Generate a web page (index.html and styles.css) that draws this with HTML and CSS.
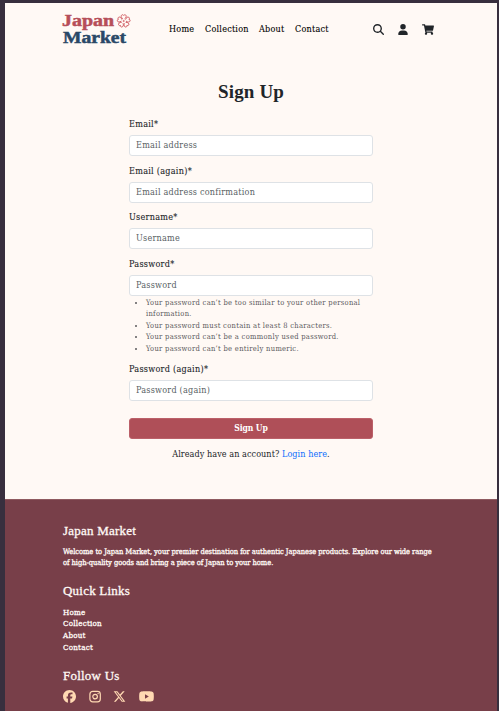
FILE: index.html
```html
<!DOCTYPE html>
<html lang="en">
<head>
<meta charset="utf-8">
<title>Sign Up - Japan Market</title>
<link rel="stylesheet" href="styles.css">
</head>
<body>
<div class="page">
  <header class="header">
    <a class="logo" href="#" aria-label="Japan Market">
      <svg width="70" height="36" viewBox="0 0 70 36">
        <text class="logo-top" x="0" y="14" textLength="52" lengthAdjust="spacingAndGlyphs">Japan</text>
        <text class="logo-bottom" x="1" y="31.3" textLength="63" lengthAdjust="spacingAndGlyphs">Market</text>
        <g class="blossom" transform="translate(61.7 9)">
          <path id="petal" d="M-.8-2.2C-3.6-4-2.6-6.8-.6-6.2L0-5.5.6-6.2C2.6-6.8 3.6-4 .8-2.2"/>
          <use href="#petal" transform="rotate(72)"/><use href="#petal" transform="rotate(144)"/>
          <use href="#petal" transform="rotate(216)"/><use href="#petal" transform="rotate(288)"/>
          <circle r=".6"/>
        </g>
      </svg>
    </a>
    <nav class="nav"><a class="n1" href="#">Home</a><a class="n2" href="#">Collection</a><a class="n3" href="#">About</a><a class="n4" href="#">Contact</a></nav>
    <div class="tools">
      <svg width="11" height="11" viewBox="0 0 512 512"><path d="M416 208c0 45.9-14.9 88.3-40 122.7L502.6 457.4c12.5 12.5 12.5 32.8 0 45.3s-32.8 12.5-45.3 0L330.7 376c-34.4 25.2-76.8 40-122.7 40C93.1 416 0 322.9 0 208S93.1 0 208 0S416 93.1 416 208zM208 352a144 144 0 1 0 0-288 144 144 0 1 0 0 288z"/></svg>
      <svg width="10" height="11" viewBox="0 0 448 512"><path d="M224 256A128 128 0 1 0 224 0a128 128 0 1 0 0 256zm-45.7 48C79.8 304 0 383.8 0 482.3C0 498.7 13.3 512 29.7 512H418.3c16.4 0 29.7-13.3 29.7-29.7C448 383.8 368.2 304 269.7 304H178.3z"/></svg>
      <svg width="12" height="11" viewBox="0 0 576 512"><path d="M528.12 301.319l47.273-208C578.806 78.301 567.391 64 551.99 64H159.208l-9.166-44.81C147.758 8.021 137.93 0 126.529 0H24C10.745 0 0 10.745 0 24v16c0 13.255 10.745 24 24 24h69.883l70.248 343.435C147.325 417.1 136 435.222 136 456c0 30.928 25.072 56 56 56s56-25.072 56-56c0-15.674-6.447-29.835-16.824-40h209.647C430.447 426.165 424 440.326 424 456c0 30.928 25.072 56 56 56s56-25.072 56-56c0-22.172-12.888-41.332-31.579-50.405l5.517-24.276c3.413-15.018-8.002-29.319-23.403-29.319H218.117l-6.545-32h293.145c11.206 0 20.92-7.754 23.403-18.681z"/></svg>
    </div>
  </header>
  <main class="main">
    <h1 class="title">Sign Up</h1>
    <form class="form">
      <div class="field"><label for="email">Email*</label><input id="email" placeholder="Email address"></div>
      <div class="field"><label for="email2">Email (again)*</label><input id="email2" placeholder="Email address confirmation"></div>
      <div class="field"><label for="user">Username*</label><input id="user" placeholder="Username"></div>
      <div class="field field-help"><label for="pass">Password*</label><input id="pass" placeholder="Password">
        <ul class="help">
          <li>Your password can’t be too similar to your other personal<br>information.</li>
          <li>Your password must contain at least 8 characters.</li>
          <li>Your password can’t be a commonly used password.</li>
          <li>Your password can’t be entirely numeric.</li>
        </ul>
      </div>
      <div class="field"><label for="pass2">Password (again)*</label><input id="pass2" placeholder="Password (again)"></div>
      <button class="submit" type="button">Sign Up</button>
      <p class="login">Already have an account? <a href="#">Login here</a>.</p>
    </form>
  </main>
  <footer class="footer">
    <h2>Japan Market</h2>
    <p class="about">Welcome to Japan Market, your premier destination for authentic Japanese products. Explore our wide range<br>of high-quality goods and bring a piece of Japan to your home.</p>
    <h2>Quick Links</h2>
    <ul class="links"><li>Home</li><li>Collection</li><li>About</li><li>Contact</li></ul>
    <h2>Follow Us</h2>
    <div class="social">
      <svg width="13" height="13" viewBox="0 0 512 512"><path d="M512 256C512 114.6 397.4 0 256 0S0 114.6 0 256C0 376 82.7 476.8 194.2 504.5V334.2H141.4V256h52.8V222.3c0-87.1 39.4-127.5 125-127.5c16.2 0 44.2 3.2 55.7 6.4V172c-6-.6-16.5-1-29.6-1c-42 0-58.2 15.9-58.2 57.2V256h83.6l-14.4 78.2H287V510.1C413.8 494.8 512 386.9 512 256z"/></svg>
      <svg width="12" height="13" viewBox="0 0 12 13"><g class="outline"><rect x=".9" y="1.4" width="10.4" height="10.4" rx="2.8"/><circle cx="6.1" cy="6.6" r="2.3"/></g><circle cx="9.1" cy="3.6" r=".7"/></svg>
      <svg width="13" height="13" viewBox="0 0 512 512"><path d="M389.2 48h70.6L305.6 224.2 487 464H345L233.7 318.6 106.5 464H35.8L200.7 275.5 26.8 48H172.4L272.9 180.9 389.2 48zM364.4 421.8h39.1L151.1 88h-42L364.4 421.8z"/></svg>
      <svg width="15" height="13" viewBox="14 14 548 484"><path d="M549.655 124.083c-6.281-23.65-24.787-42.276-48.284-48.597C458.781 64 288 64 288 64S117.22 64 74.629 75.486c-23.497 6.322-42.003 24.947-48.284 48.597-11.412 42.867-11.412 132.305-11.412 132.305s0 89.438 11.412 132.305c6.281 23.65 24.787 41.5 48.284 47.821C117.22 448 288 448 288 448s170.78 0 213.371-11.486c23.497-6.321 42.003-24.171 48.284-47.821 11.412-42.867 11.412-132.305 11.412-132.305s0-89.438-11.412-132.305zm-317.51 213.508V175.185l142.739 81.205-142.739 81.201z"/></svg>
    </div>
  </footer>
</div>
</body>
</html>
```
FILE: styles.css
```css
* { box-sizing: border-box; }
body {
  margin: 0;
  height: 711px;
  overflow: hidden;
  padding: 3px 2px 0 5px;
  background: #382f3e;
  color: #212529;
  font: 9px/12px "DejaVu Serif Condensed", "DejaVu Serif", serif;
}
a { text-decoration: none; color: inherit; }
svg { display: block; }
h1, h2, p, ul { margin: 0; padding: 0; font-weight: normal; }
.page { height: 708px; background: #fff9f5; display: flex; flex-direction: column; }
.header { height: 52px; padding: 0 63px 0 57px; display: flex; align-items: center; }
.logo { width: 70px; height: 36px; margin-top: 2px; }
.logo svg { overflow: visible; }
.logo text { font: bold 17px "Liberation Serif", serif; stroke-width: .5; }
.logo-top { fill: #b64e59; stroke: #b64e59; }
.logo-bottom { fill: #2a4867; stroke: #2a4867; }
.blossom { fill: none; stroke: #cf5a60; stroke-width: .9; }
.nav { margin-left: 37px; display: flex; gap: 10px; color: #000; white-space: nowrap; letter-spacing: .22px; -webkit-text-stroke: .1px; }
.n1 { width: 26px; }
.n2 { width: 44px; }
.n3 { width: 26px; }
.n4 { width: 34px; }
.tools { margin-left: auto; display: flex; gap: 14px; fill: #212529; }
.main { height: 444px; width: 244px; margin: 0 auto; padding-top: 25px; }
.title { font: bold 19px/24px "Liberation Serif", serif; letter-spacing: .15px; text-align: center; }
.form { margin-top: 14px; }
.field { height: 46.6px; }
.field label { display: block; height: 17px; line-height: 12px; letter-spacing: .27px; -webkit-text-stroke: .1px; }
.field input {
  display: block; width: 100%; height: 21px; padding: 0 6px 1px;
  border: 1px solid #dee2e6; border-radius: 3px; background: #fff; font: inherit; letter-spacing: .22px; outline: 0;
}
.field input::placeholder { color: #595f65; opacity: 1; }
.field-help { height: 105px; }
.help { padding-left: 17px; margin-top: .8px; color: #5b5a5d; font-size: 7.5px; letter-spacing: .3px; line-height: 11.6px; white-space: nowrap; }
.submit {
  display: block; width: 100%; height: 21px; margin-top: 8.5px; padding: 0;
  border: 1px solid #bb6069; border-radius: 3px; background: #af4f58; color: #fff; font: bold 8.5px/12px "DejaVu Serif Condensed", serif; letter-spacing: -.1px;
}
.login { margin-top: 9px; text-align: center; white-space: nowrap; letter-spacing: .06px; }
.login a { color: #0d6efd; }
.footer { flex: 1; padding: 23px 58px 0; background: #783f49; border-top: 1px solid #8f5a60; color: #fff9f5; white-space: nowrap; }
.footer h2 { font: 13px/16px "Liberation Serif", serif; letter-spacing: .22px; -webkit-text-stroke: .3px; }
.about { margin-top: 7px; margin-bottom: 14px; font-size: 7.5px; letter-spacing: -.057px; line-height: 11.3px; -webkit-text-stroke: .3px; }
.links { margin-top: 8px; margin-bottom: 14.6px; list-style: none; font-size: 8px; letter-spacing: .2px; line-height: 11.7px; -webkit-text-stroke: .3px; }
.social { display: flex; gap: 12.5px; margin-top: 6px; fill: #ffd9b3; }
.outline { fill: none; stroke: #ffd9b3; stroke-width: 1.2; }
```
